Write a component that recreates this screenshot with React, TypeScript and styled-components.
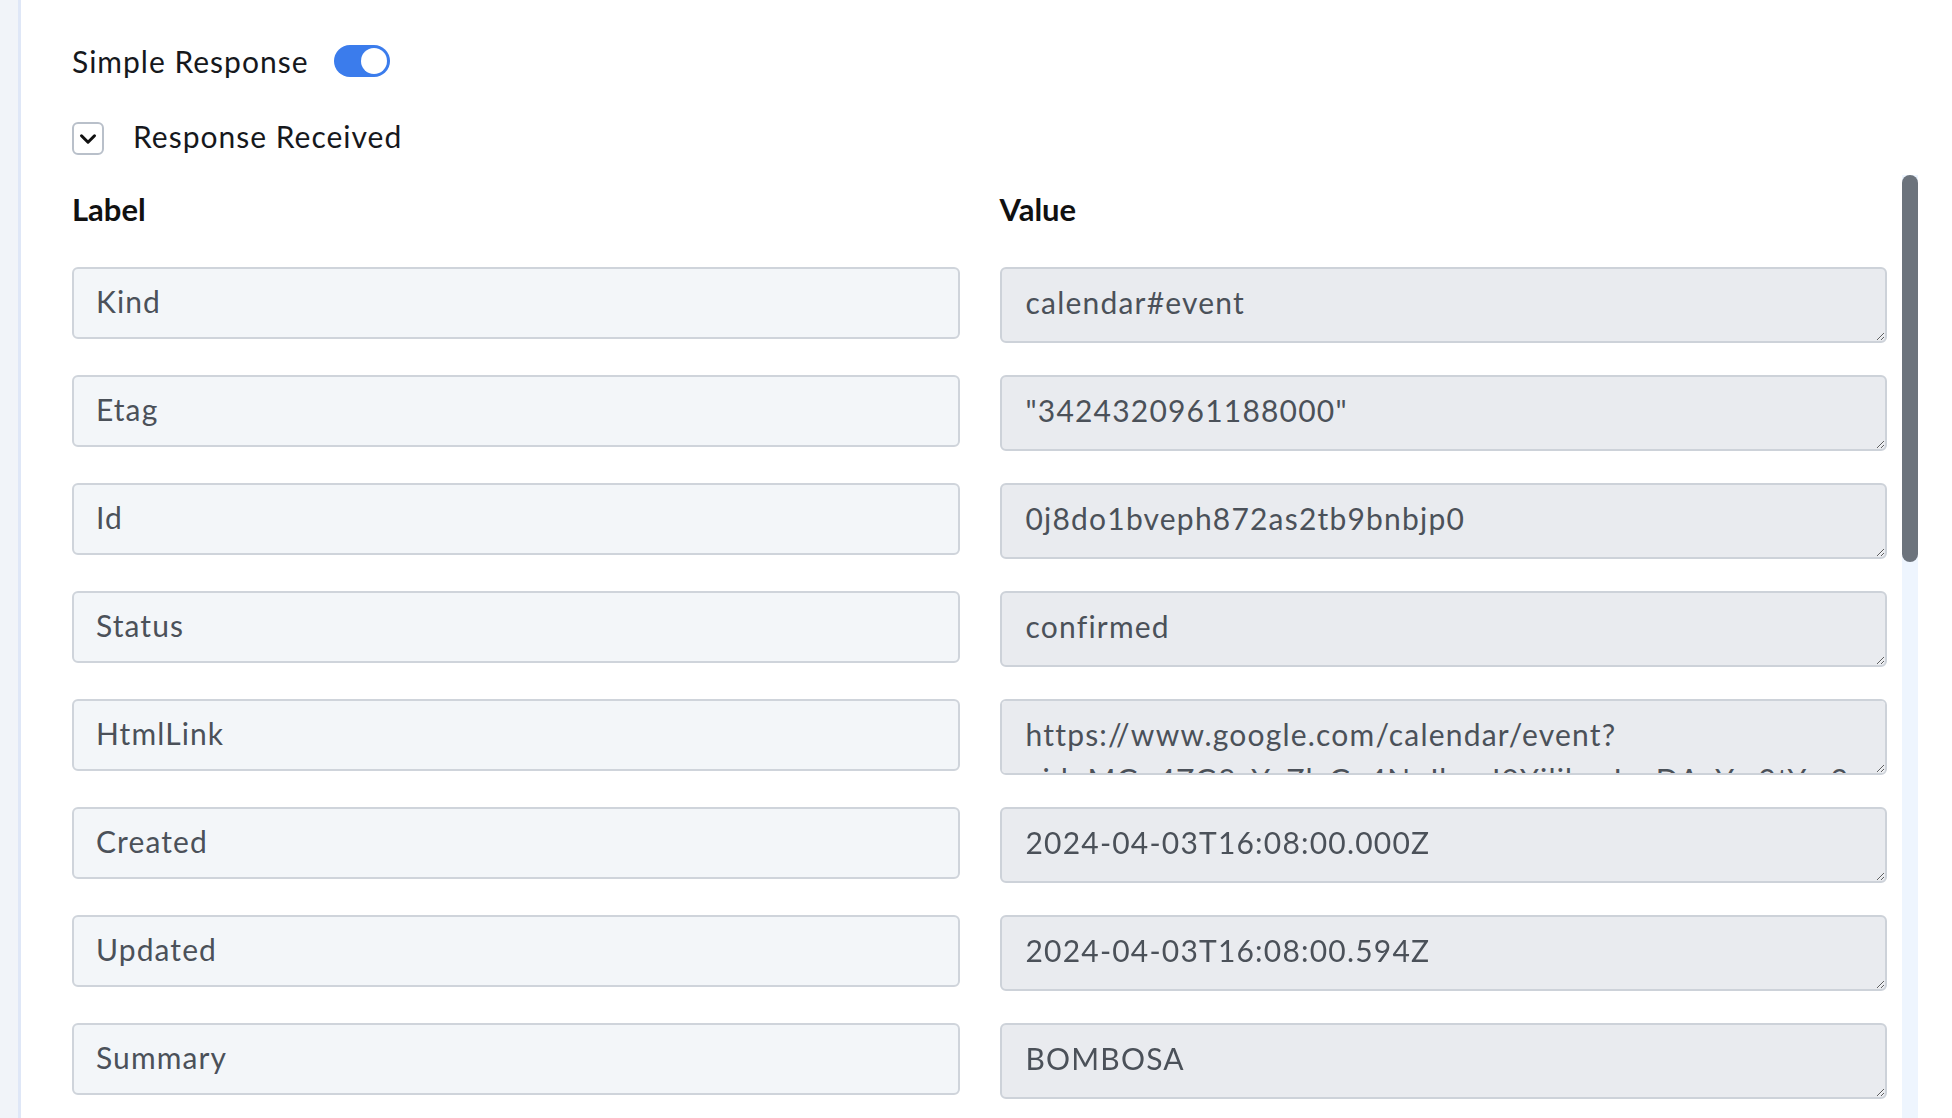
import React from 'react';
import styled, { createGlobalStyle } from 'styled-components';
import { ChevronDown } from 'lucide-react';

interface Field {
  label: string;
  value: string;
}

const fields: Field[] = [
  { label: 'Kind', value: 'calendar#event' },
  { label: 'Etag', value: '"3424320961188000"' },
  { label: 'Id', value: '0j8do1bveph872as2tb9bnbjp0' },
  { label: 'Status', value: 'confirmed' },
  {
    label: 'HtmlLink',
    value:
      'https://www.google.com/calendar/event?eid=MGo4ZG8xYnZlcGg4NzJhczJ0YjlibmJqcDAgYm9tYm9zYS5ldmVudHNAbQ',
  },
  { label: 'Created', value: '2024-04-03T16:08:00.000Z' },
  { label: 'Updated', value: '2024-04-03T16:08:00.594Z' },
  { label: 'Summary', value: 'BOMBOSA' },
  { label: 'Creator Email', value: 'bombosa.events@gmail.com' },
  { label: 'Creator Self', value: 'true' },
  { label: 'Organizer Email', value: 'bombosa.events@gmail.com' },
  { label: 'Organizer Self', value: 'true' },
  { label: 'Start DateTime', value: '2024-04-05T19:00:00+02:00' },
  { label: 'Start TimeZone', value: 'Europe/Madrid' },
  { label: 'End DateTime', value: '2024-04-05T21:00:00+02:00' },
  { label: 'End TimeZone', value: 'Europe/Madrid' },
  { label: 'ICalUID', value: '0j8do1bveph872as2tb9bnbjp0@google.com' },
  { label: 'Sequence', value: '0' },
  { label: 'Reminders UseDefault', value: 'true' },
  { label: 'EventType', value: 'default' },
];

// visible share of the list, used for the rail thumb
const THUMB_RATIO = 0.41;

const GlobalStyle = createGlobalStyle`
  * {
    box-sizing: border-box;
  }
  body {
    margin: 0;
    background: #f1f4f9;
    font-family: Lato, "Open Sans", sans-serif;
    color: #16181c;
    overflow: hidden;
  }
`;

const Page = styled.div`
  display: flex;
  height: 100vh;
  padding-left: 18px;
`;

const Panel = styled.section`
  flex: 1;
  min-width: 0;
  display: flex;
  flex-direction: column;
  background: #fff;
  border-left: 3px solid #dfe7f7;
  padding: 45px 34px 0 51px;
`;

const ControlRow = styled.div<{ $gap: number; $height: number; $top?: number }>`
  display: flex;
  align-items: center;
  gap: ${(p) => p.$gap}px;
  height: ${(p) => p.$height}px;
  margin-top: ${(p) => p.$top ?? 0}px;
  font-size: 30px;
  line-height: 32px;
  letter-spacing: 1px;
`;

const ControlText = styled.span<{ $lift?: number }>`
  padding-bottom: ${(p) => p.$lift ?? 0}px;
`;

const Switch = styled.span<{ $on: boolean }>`
  display: inline-flex;
  align-items: center;
  justify-content: ${(p) => (p.$on ? 'flex-end' : 'flex-start')};
  width: 56px;
  height: 32px;
  padding: 0 3px;
  border-radius: 16px;
  background: ${(p) => (p.$on ? '#3b7cec' : '#cfd4db')};
`;

const Knob = styled.span`
  width: 26px;
  height: 26px;
  border-radius: 50%;
  background: #fff;
`;

const CollapseButton = styled.button`
  display: flex;
  align-items: center;
  justify-content: center;
  width: 32px;
  height: 33px;
  padding: 0;
  border: 2px solid #b9c0ca;
  border-radius: 6px;
  background: #fff;
  color: #111;
`;

const ScrollArea = styled.div`
  flex: 1;
  min-height: 0;
  display: flex;
  margin-top: 20px;
`;

const ScrollContent = styled.div`
  flex: 1;
  min-width: 0;
  overflow: hidden;
  padding: 16px 15px 0 0;
`;

const ScrollRail = styled.div`
  flex: 0 0 16px;
  background: #eef5fe;
`;

const ScrollThumb = styled.div`
  width: 16px;
  border-radius: 8px;
  background: #6c737c;
`;

const FieldGrid = styled.div`
  display: grid;
  grid-template-columns: 1fr 1fr;
  column-gap: 40px;
  row-gap: 32px;
  align-items: start;
`;

const ColumnHeading = styled.div`
  margin-bottom: 7px;
  font-size: 31px;
  font-weight: 700;
  line-height: 37px;
  color: #111;
`;

const LabelInput = styled.input`
  width: 100%;
  height: 72px;
  padding: 0 22px 4px;
  border: 2px solid #cfd4db;
  border-radius: 6px;
  background: #f3f6f9;
  font-family: inherit;
  font-size: 30px;
  letter-spacing: 1.1px;
  color: #4b5159;
  outline: none;
`;

const ValueArea = styled.textarea`
  display: block;
  width: 100%;
  height: 76px;
  padding: 11px 22px 9px 24px;
  border: 2px solid #cdd2d9;
  border-radius: 6px;
  background: #e9ebef;
  font-family: inherit;
  font-size: 30px;
  line-height: 45px;
  letter-spacing: 1.2px;
  color: #4b5159;
  resize: vertical;
  outline: none;
`;

export default function App() {
  return (
    <>
      <GlobalStyle />
      <Page>
        <Panel>
          <ControlRow $gap={26} $height={32}>
            <ControlText>Simple Response</ControlText>
            <Switch $on role="switch" aria-checked>
              <Knob />
            </Switch>
          </ControlRow>
          <ControlRow $gap={29} $height={33} $top={45}>
            <CollapseButton aria-label="Collapse">
              <ChevronDown size={26} strokeWidth={2.8} />
            </CollapseButton>
            <ControlText $lift={5}>Response Received</ControlText>
          </ControlRow>
          <ScrollArea>
            <ScrollContent>
              <FieldGrid>
                <ColumnHeading>Label</ColumnHeading>
                <ColumnHeading>Value</ColumnHeading>
                {fields.map((f) => (
                  <React.Fragment key={f.label}>
                    <LabelInput readOnly defaultValue={f.label} />
                    <ValueArea readOnly rows={1} defaultValue={f.value} />
                  </React.Fragment>
                ))}
              </FieldGrid>
            </ScrollContent>
            <ScrollRail>
              <ScrollThumb style={{ height: `${THUMB_RATIO * 100}%` }} />
            </ScrollRail>
          </ScrollArea>
        </Panel>
      </Page>
    </>
  );
}
